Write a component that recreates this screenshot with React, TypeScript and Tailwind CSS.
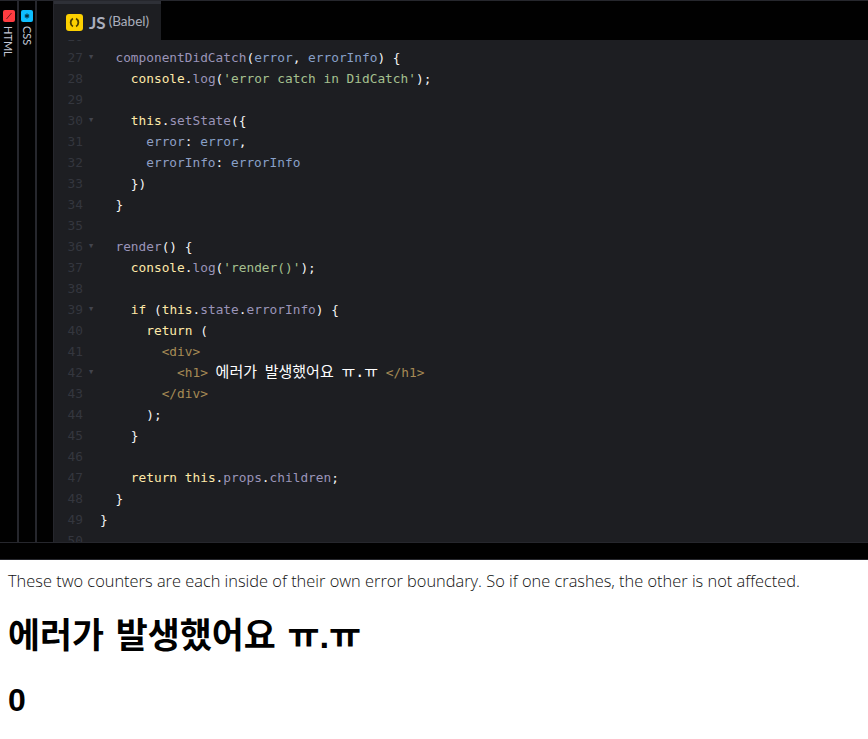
const mono = "font-['DejaVu_Sans_Mono','Noto_Sans_CJK_KR',monospace]";

type Token = [string, string];

const P = 'text-[#f4f4f4]'; // punctuation
const Y = 'text-[#ffe9a8]'; // this, console, return
const M = 'text-[#9a94b8]'; // method names
const V = 'text-[#88a0c8]'; // variables
const A = 'text-[#8f9fc4]'; // props
const S = 'text-[#a5c08f]'; // strings
const T = 'text-[#a68a55]'; // jsx tags
const W = 'text-white text-[15px]'; // korean text runs wider than the mono cells

const lines: { n: number; fold?: boolean; indent?: number; t?: Token[] }[] = [
  { n: 26 },
  {
    n: 27,
    fold: true,
    indent: 1,
    t: [
      ['componentDidCatch', M],
      ['(', P],
      ['error', V],
      [', ', P],
      ['errorInfo', V],
      [') {', P],
    ],
  },
  {
    n: 28,
    indent: 2,
    t: [
      ['console', Y],
      ['.', P],
      ['log', M],
      ['(', P],
      ["'error catch in DidCatch'", S],
      [');', P],
    ],
  },
  { n: 29 },
  {
    n: 30,
    fold: true,
    indent: 2,
    t: [
      ['this', Y],
      ['.', P],
      ['setState', M],
      ['({', P],
    ],
  },
  {
    n: 31,
    indent: 3,
    t: [
      ['error', A],
      [': ', P],
      ['error', V],
      [',', P],
    ],
  },
  {
    n: 32,
    indent: 3,
    t: [
      ['errorInfo', A],
      [': ', P],
      ['errorInfo', V],
    ],
  },
  { n: 33, indent: 2, t: [['})', P]] },
  { n: 34, indent: 1, t: [['}', P]] },
  { n: 35 },
  {
    n: 36,
    fold: true,
    indent: 1,
    t: [
      ['render', M],
      ['() {', P],
    ],
  },
  {
    n: 37,
    indent: 2,
    t: [
      ['console', Y],
      ['.', P],
      ['log', M],
      ['(', P],
      ["'render()'", S],
      [');', P],
    ],
  },
  { n: 38 },
  {
    n: 39,
    fold: true,
    indent: 2,
    t: [
      ['if', Y],
      [' (', P],
      ['this', Y],
      ['.', P],
      ['state', M],
      ['.', P],
      ['errorInfo', M],
      [') {', P],
    ],
  },
  {
    n: 40,
    indent: 3,
    t: [
      ['return', Y],
      [' (', P],
    ],
  },
  { n: 41, indent: 4, t: [['<div>', T]] },
  {
    n: 42,
    fold: true,
    indent: 5,
    t: [
      ['<h1>', T],
      [' ', P],
      ['에러가', W],
      [' ', P],
      ['발생했어요', W],
      [' ', P],
      ['ㅠ.ㅠ', W],
      [' ', P],
      ['</h1>', T],
    ],
  },
  { n: 43, indent: 4, t: [['</div>', T]] },
  { n: 44, indent: 3, t: [[');', P]] },
  { n: 45, indent: 2, t: [['}', P]] },
  { n: 46 },
  {
    n: 47,
    indent: 2,
    t: [
      ['return', Y],
      [' ', P],
      ['this', Y],
      ['.', P],
      ['props', M],
      ['.', P],
      ['children', M],
      [';', P],
    ],
  },
  { n: 48, indent: 1, t: [['}', P]] },
  { n: 49, t: [['}', P]] },
  { n: 50 },
];

function SideTab({ label, icon, width }: { label: string; icon: React.ReactNode; width: string }) {
  return (
    <div className={`flex shrink-0 flex-col items-center border-r-2 border-[#26272d] pt-[9px] ${width}`}>
      {icon}
      <span className="mt-[4px] text-[11px] leading-none text-[#c4c7d4] [writing-mode:vertical-rl] font-['Lato',sans-serif]">
        {label}
      </span>
    </div>
  );
}

export default function App() {
  return (
    <div className="h-[739px] w-[868px] overflow-hidden bg-white">
      <div className="flex h-[560px] flex-col border-t border-[#26272d] bg-[#010101]">
        <div className="flex h-[541px]">
          <SideTab
            width="w-[19px]"
            label="HTML"
            icon={
              <svg width="12" height="12" viewBox="0 0 12 12" className="shrink-0">
                <rect width="12" height="12" rx="2" fill="#ff3c41" />
                <path d="M8.5 3L3.5 9" stroke="#6e1a1d" strokeWidth="1" />
              </svg>
            }
          />
          <SideTab
            width="w-[18px]"
            label="CSS"
            icon={
              <svg width="12" height="12" viewBox="0 0 12 12" className="shrink-0">
                <rect width="12" height="12" rx="2" fill="#0ebeff" />
                <path d="M6 3.5v5M3.8 4.7l4.4 2.6M8.2 4.7L3.8 7.3" stroke="#04303f" strokeWidth="1.1" />
              </svg>
            }
          />
          <div className="w-[17px] shrink-0 border-r border-[#26272d]" />
          <div className="flex min-w-0 flex-1 flex-col">
            <div className="h-[39px] shrink-0 bg-[#010101]">
              <div className="flex h-full w-[107px] items-center border-t-[3px] border-[#2e3037] bg-[#1d1e22] pl-[12px]">
                <svg width="17" height="17" viewBox="0 0 17 17" className="shrink-0">
                  <rect width="17" height="17" rx="3" fill="#fcd000" />
                  <path d="M6.9 4.4C3.9 6.2 3.9 10.8 6.9 12.6" fill="none" stroke="#4a3d00" strokeWidth="1.8" />
                  <path d="M10.1 4.4C13.1 6.2 13.1 10.8 10.1 12.6" fill="none" stroke="#4a3d00" strokeWidth="1.8" />
                </svg>
                <span className="ml-[6px] text-[17px] leading-none font-bold text-[#aaaebc] font-['Lato',sans-serif]">JS</span>
                <span className="ml-[3px] text-[13.5px] leading-none text-[#aaaebc] font-['Lato',sans-serif]">(Babel)</span>
              </div>
            </div>
            <div className="min-h-0 flex-1 overflow-hidden bg-[#1d1e22]">
              <div className={`-mt-[14px] text-[12.8px] leading-[21px] ${mono}`}>
                {lines.map((l) => (
                  <div key={l.n} className="flex h-[21px] whitespace-pre">
                    <span className="w-[29px] shrink-0 text-right text-[#34363e]">{l.n}</span>
                    <span className="w-[17px] shrink-0 pl-[6px] text-[7px] text-[#42444d]">{l.fold ? '▼' : ''}</span>
                    <span>
                      {'  '.repeat(l.indent ?? 0)}
                      {l.t?.map((tok, i) => (
                        <span key={i} className={tok[1]}>
                          {tok[0]}
                        </span>
                      ))}
                    </span>
                  </div>
                ))}
              </div>
            </div>
          </div>
        </div>
        <div className="h-[18px] border-y border-[#26272d] bg-[#010101]" />
      </div>
      <div className="px-2 text-black font-['Open_Sans','Noto_Sans_CJK_KR',sans-serif]">
        <p className="pt-[10px] text-[16.4px] leading-[22px] font-light text-[#111]">
          These two counters are each inside of their own error boundary. So if one crashes, the other is not affected.
        </p>
        <h1 className="mt-[22px] text-[34.8px] leading-[44px] font-bold [word-spacing:2px] font-['Liberation_Sans','Noto_Sans_CJK_KR',sans-serif]">
          에러가 발생했어요 ㅠ.ㅠ
        </h1>
        <h1 className="mt-[24px] text-[32px] leading-[37px] font-bold font-['Liberation_Sans','Noto_Sans_CJK_KR',sans-serif]">
          0
        </h1>
      </div>
    </div>
  );
}
